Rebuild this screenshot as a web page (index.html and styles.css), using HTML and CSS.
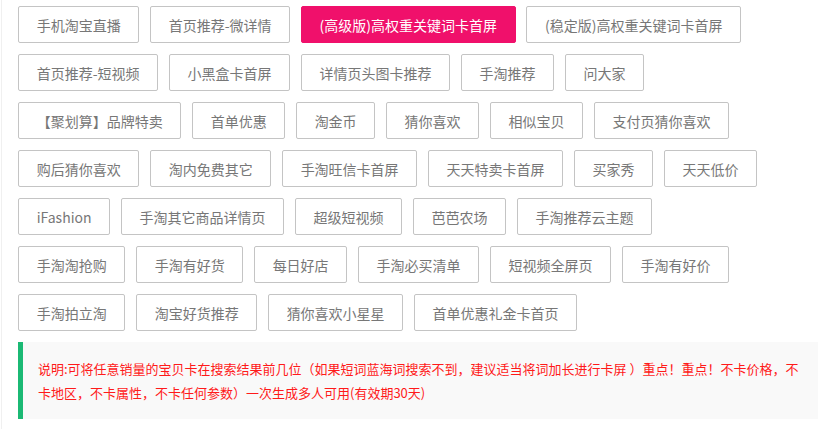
FILE: index.html
```html
<html>
<head>
	<meta charset="utf-8">
	<meta name="viewport" content="width=device-width, initial-scale=1">
	<title>卡首屏</title>
	<link rel="stylesheet" href="styles.css">
</head>
<body>

	<div class="panel">
		<div class="row">
			<span class="tag">手机淘宝直播</span>
			<span class="tag">首页推荐-微详情</span>
			<span class="tag active">(高级版)高权重关键词卡首屏</span>
			<span class="tag">(稳定版)高权重关键词卡首屏</span>
		</div>
		<div class="row">
			<span class="tag">首页推荐-短视频</span>
			<span class="tag">小黑盒卡首屏</span>
			<span class="tag">详情页头图卡推荐</span>
			<span class="tag">手淘推荐</span>
			<span class="tag">问大家</span>
		</div>
		<div class="row">
			<span class="tag">【聚划算】品牌特卖</span>
			<span class="tag">首单优惠</span>
			<span class="tag">淘金币</span>
			<span class="tag">猜你喜欢</span>
			<span class="tag">相似宝贝</span>
			<span class="tag">支付页猜你喜欢</span>
		</div>
		<div class="row">
			<span class="tag">购后猜你喜欢</span>
			<span class="tag">淘内免费其它</span>
			<span class="tag">手淘旺信卡首屏</span>
			<span class="tag">天天特卖卡首屏</span>
			<span class="tag">买家秀</span>
			<span class="tag">天天低价</span>
		</div>
		<div class="row">
			<span class="tag">iFashion</span>
			<span class="tag">手淘其它商品详情页</span>
			<span class="tag">超级短视频</span>
			<span class="tag">芭芭农场</span>
			<span class="tag">手淘推荐云主题</span>
		</div>
		<div class="row">
			<span class="tag">手淘淘抢购</span>
			<span class="tag">手淘有好货</span>
			<span class="tag">每日好店</span>
			<span class="tag">手淘必买清单</span>
			<span class="tag">短视频全屏页</span>
			<span class="tag">手淘有好价</span>
		</div>
		<div class="row">
			<span class="tag">手淘拍立淘</span>
			<span class="tag">淘宝好货推荐</span>
			<span class="tag">猜你喜欢小星星</span>
			<span class="tag">首单优惠礼金卡首页</span>
		</div>

		<div class="notice">
			说明:可将任意销量的宝贝卡在搜索结果前几位（如果短词蓝海词搜索不到，建议适当将词加长进行卡屏 ）重点！重点！不卡价格，不卡地区，不卡属性，不卡任何参数）一次生成多人可用(有效期30天)
		</div>
	</div>

</body>
</html>
```

FILE: styles.css
```css
*{
	box-sizing: border-box;
	padding: 0;
	margin: 0;
}
body
{
	background: #fff;
	font-family: "Microsoft YaHei", "Noto Sans CJK SC", sans-serif;
}
.panel
{
	margin-left: 1px;
	border-left: 1px solid #f0f0f0;
	padding: 6px 9px 0 16px;
	min-height: 429px;
}
.row
{
	display: flex;
	gap: 10.6px;
	margin-bottom: 10.6px;
}
.tag
{
	display: block;
	height: 37.4px;
	line-height: 37px;
	padding: 0 17.7px;
	border: 1px solid #c4c4c4;
	border-radius: 2px;
	font-size: 14px;
	color: #777;
	white-space: nowrap;
	overflow: hidden;
	cursor: pointer;
}
.tag.active
{
	background: #f0106b;
	border-color: #f0106b;
	color: #fff;
}
.notice
{
	margin-top: -0.3px;
	background: #f9f9f9;
	border-left: 5px solid #1bb974;
	padding: 15px 15px 14px 15px;
	font-size: 13px;
	line-height: 24px;
	color: #ff1a1a;
}
```
